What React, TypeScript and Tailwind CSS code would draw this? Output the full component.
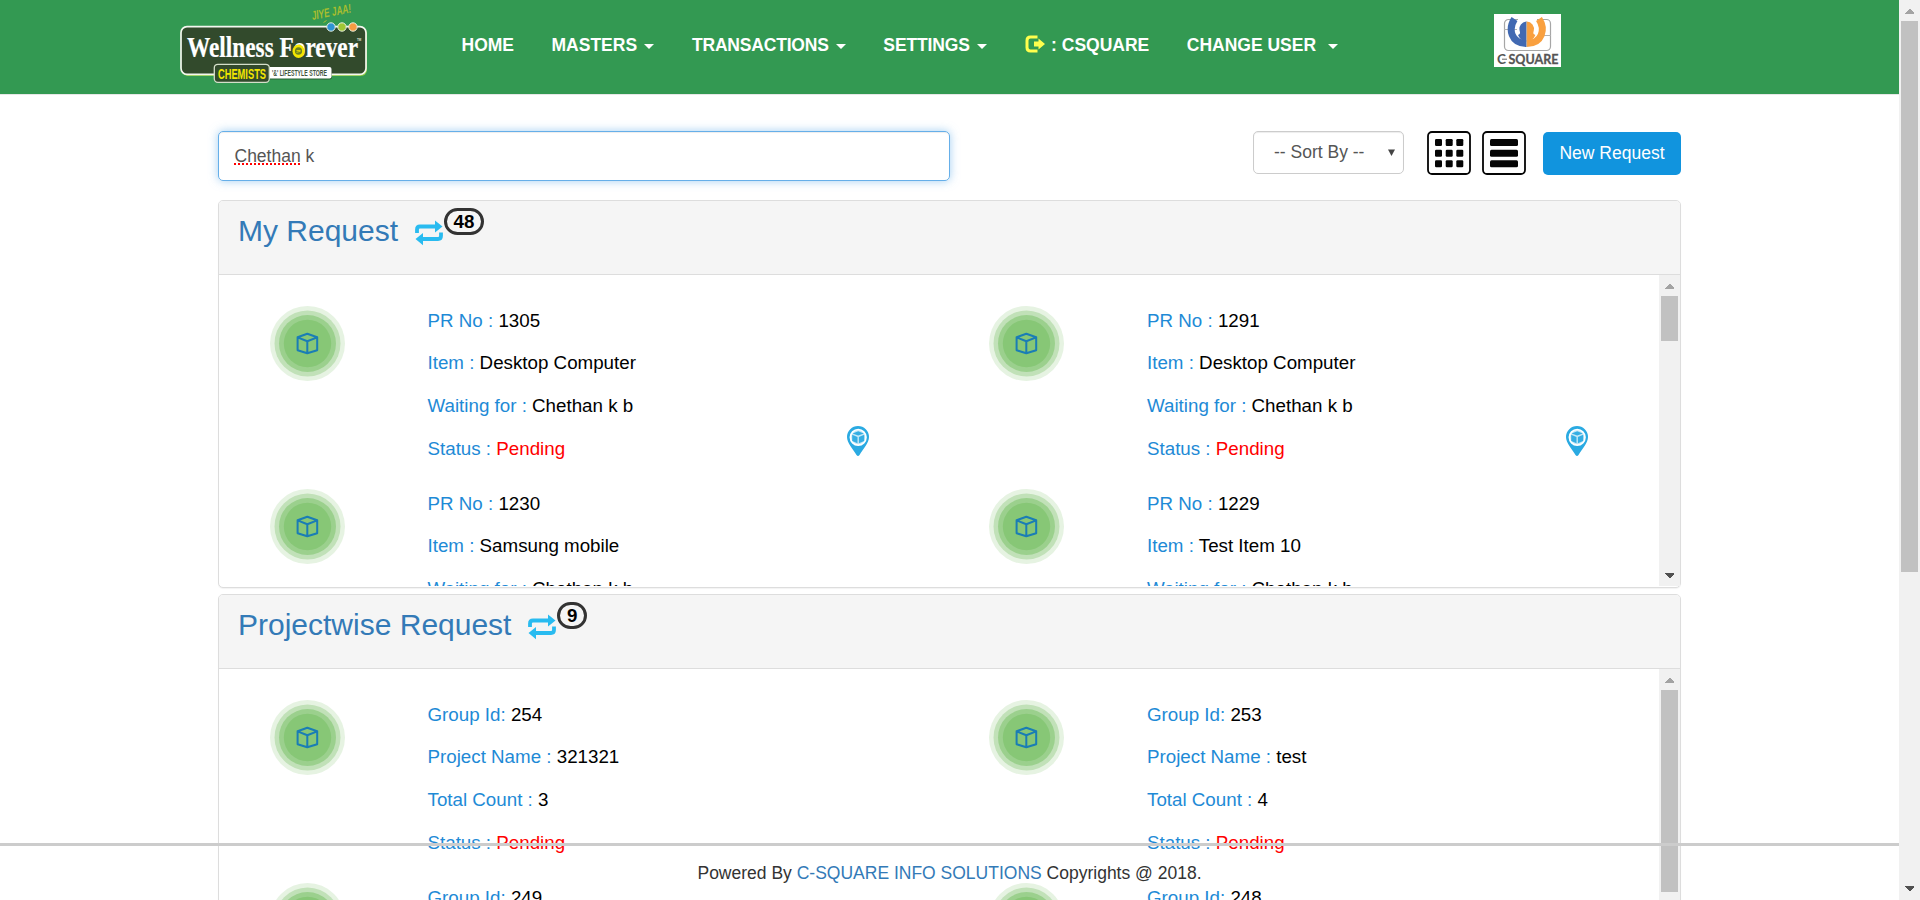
import React from "react";

type Field = { label: string; value: string; alert?: boolean };
type Entry = { id: string; fields: Field[]; pin?: boolean };

const request = (no: string, item: string): Entry => ({
  id: no,
  pin: true,
  fields: [
    { label: "PR No :", value: no },
    { label: "Item :", value: item },
    { label: "Waiting for :", value: "Chethan k b" },
    { label: "Status :", value: "Pending", alert: true },
  ],
});

const group = (id: string, name: string, count: string): Entry => ({
  id,
  fields: [
    { label: "Group Id:", value: id },
    { label: "Project Name :", value: name },
    { label: "Total Count :", value: count },
    { label: "Status :", value: "Pending", alert: true },
  ],
});

const requests = [
  request("1305", "Desktop Computer"),
  request("1291", "Desktop Computer"),
  request("1230", "Samsung mobile"),
  request("1229", "Test Item 10"),
];

const groups = [
  group("254", "321321", "3"),
  group("253", "test", "4"),
  group("249", "test", "1"),
  group("248", "test", "1"),
];

function Caret() {
  return (
    <svg className="ml-[2.5px] mt-[2px] h-[5px] w-[10px]" viewBox="0 0 10 5">
      <path d="M0 0h10L5 5z" fill="#fff" />
    </svg>
  );
}

function WellnessLogo() {
  return (
    <svg className="h-[94px] w-[200px]" viewBox="0 0 200 94">
      <text x="0" y="0" transform="translate(132.500 20) rotate(-11)" fontFamily="Liberation Sans Narrow, Liberation Sans, sans-serif" fontStyle="italic" fontSize="12.5" textLength="40" lengthAdjust="spacingAndGlyphs" fill="#a9bd2f">JIYE JAA!</text>
      <path d="M143.500 22.500l3-2" stroke="#a9bd2f" strokeWidth="1" />
      <rect x="2" y="28" width="185" height="48" rx="6" fill="#8ccb3f" />
      <rect x="1" y="26.7" width="185" height="47.6" rx="6" fill="#324a2c" stroke="#f4f7ef" strokeWidth="1.7" />
      <circle cx="151" cy="27" r="4.200" fill="#2e94d4" stroke="#e8efe0" strokeWidth="1" />
      <circle cx="162" cy="27" r="4.200" fill="#9fc735" stroke="#e8efe0" strokeWidth="1" />
      <circle cx="173" cy="27" r="4.200" fill="#f79c42" stroke="#e8efe0" strokeWidth="1" />
      <text x="7" y="57" fontFamily="Liberation Serif, serif" fontSize="28.500" textLength="171" lengthAdjust="spacingAndGlyphs" fill="#fff" stroke="#fff" strokeWidth="0.2">Wellness Forever</text>
      <ellipse cx="118.5" cy="51.3" rx="6" ry="6.7" fill="#f3e600" />
      <ellipse cx="118.5" cy="51" rx="3.6" ry="3.8" fill="#6f8420" />
      <path d="M116.5 50.5h4M116.5 52.3l4-1" stroke="#f3e600" strokeWidth="0.8" />
      <text x="177" y="41" fontFamily="Liberation Sans, sans-serif" fontSize="3" fill="#dfe6da">TM</text>
      <rect x="88" y="67" width="64" height="12.5" rx="2.5" fill="#263c22" opacity=".6" />
      <rect x="88" y="67" width="63.5" height="11.5" rx="2" fill="#fff" />
      <rect x="34.3" y="64.3" width="55" height="18" rx="3.5" fill="#324a2c" stroke="#d5dfca" strokeWidth="1.3" />
      <text x="38" y="78.8" fontFamily="Liberation Sans Narrow, Liberation Sans, sans-serif" fontWeight="bold" fontSize="15.3" textLength="48" lengthAdjust="spacingAndGlyphs" fill="#f3e600">CHEMISTS</text>
      <text x="92" y="76.4" fontFamily="Liberation Sans Narrow, Liberation Sans, sans-serif" fontWeight="bold" fontSize="8.4" textLength="55" lengthAdjust="spacingAndGlyphs" fill="#44543f">'&amp;' LIFESTYLE STORE</text>
    </svg>
  );
}

function CSquareLogo() {
  return (
    <svg className="h-[53px] w-[67px] bg-white" viewBox="0 0 67 53">
      <rect x="10.5" y="5.5" width="46" height="31" rx="4" fill="none" stroke="#a6a6a6" strokeWidth="1.2" />
      <path d="M10 15.5h13M44 21.5h13" stroke="#b2b2b2" strokeWidth="1" />
      <path d="M24 1h19v6H24z" fill="#fff" />
      <path d="M20.5 5C14 15 17 29.500 32.700 29.500" fill="none" stroke="#4169b2" strokeWidth="7" />
      <path d="M45 5c6.500 10 3.500 24.500-12.300 24.500" fill="none" stroke="#f9a03f" strokeWidth="7" />
      <path d="M32.700 7.500a7.500 7.500 0 0 0-7 9.500c.5 2 .8 3-1.700 4 1.500 4 5 6 8.700 7z" fill="#4169b2" />
      <path d="M32.700 7.500a7.500 7.500 0 0 1 7 9.500c-.5 2-.8 3 1.700 4-1.500 4-5 6-8.700 7z" fill="#f9a03f" />
      <path d="M32.700 7.500V33" stroke="#cdbfa8" strokeWidth="0.600" />
      <text x="3" y="50" fontFamily="Lato, sans-serif" fontWeight="bold" fontSize="14" textLength="9" lengthAdjust="spacingAndGlyphs" fill="#555">C</text>
      <path d="M8 45.200h5" stroke="#555" strokeWidth="0.900" />
      <text x="14.500" y="50" fontFamily="Lato, sans-serif" fontWeight="bold" fontSize="14" textLength="50" lengthAdjust="spacingAndGlyphs" fill="#555" stroke="#555" strokeWidth="0.300">SQUARE</text>
    </svg>
  );
}

function LogOutIcon() {
  return (
    <svg className="mr-[6.500px] -mt-[3px] h-[18px] w-[20px]" viewBox="0 0 20 18">
      <path d="M12.500 2H5.500Q2 2 2 5.500v7Q2 16 5.500 16h7" fill="none" stroke="#ffff4d" strokeWidth="3" />
      <path d="M9 6.500h4.500V3.500L20 9l-6.500 5.500v-3H9z" fill="#ffff4d" />
    </svg>
  );
}

function RepeatIcon() {
  return (
    <svg className="mt-[19px] h-[26px] w-[28px]" viewBox="0 0 28 26">
      <path d="M2 13V9.500Q2 6.500 5 6.500h16M26 12.500V16q0 3-3 3H7" fill="none" stroke="#29bbf0" strokeWidth="3.800" />
      <path d="M20 .5L27.500 6.500 20 12.500zM8 13L.5 19 8 25.200z" fill="#29bbf0" />
    </svg>
  );
}

function CubeBadge() {
  return (
    <svg className="mt-[6.500px] h-[75px] w-[75px]" viewBox="0 0 75 75">
      <circle cx="37.500" cy="37.500" r="37.500" fill="#e6f3e2" />
      <circle cx="37.500" cy="37.500" r="33" fill="#c1e1b8" />
      <circle cx="37.500" cy="37.500" r="28.500" fill="#9bd08d" />
      <circle cx="37.500" cy="37.500" r="23.700" fill="#87c776" />
      <path d="M37.300 27.800L47.200 31.200V44.200L37.300 47.300 27.600 44.200V31.200zM27.600 31.400l9.700 3.900 9.900-3.900M37.300 35.300V47" fill="none" stroke="#1a7db5" strokeWidth="2" strokeLinejoin="round" />
    </svg>
  );
}

function PinIcon() {
  return (
    <svg className="mt-[127px] h-[30px] w-[22px]" viewBox="0 0 22 30">
      <path d="M11 0a11 11 0 0 1 11 11c0 6-6 12-9.500 18q-1.500 2-3 0C6 23 0 17 0 11A11 11 0 0 1 11 0z" fill="#2aaae2" />
      <circle cx="11.200" cy="11.300" r="7.800" fill="#c4e8f7" stroke="#fff" strokeWidth="1.700" />
      <path d="M11.200 5.300l5.600 2.100-5.600 2.200-5.600-2.200zM5.200 8.800l5.300 2.200v6.200l-5.300-2.200zM17.200 8.800l-5.300 2.200v6.200l5.300-2.200z" fill="#35aee3" />
    </svg>
  );
}

function Arrow({ down }: { down?: boolean }) {
  return (
    <svg className="h-[5px] w-[9px]" viewBox="0 0 9 5" shapeRendering="crispEdges">
      {down ? <path d="M0 0h9v1L5 5H4L0 1z" fill="#505050" /> : <path d="M0 5h9V4L5 0H4L0 4z" fill="#a3a3a3" />}
    </svg>
  );
}

function ScrollTrack({ thumb, end }: { thumb: string; end: string }) {
  return (
    <div className={`flex h-full w-[21px] shrink-0 flex-col items-center bg-[#f1f1f1] pt-[9px] ${end}`}>
      <Arrow />
      <div className={`mt-[7px] w-[17px] shrink-0 bg-[#c1c1c1] ${thumb}`} />
      <div className="mt-auto">
        <Arrow down />
      </div>
    </div>
  );
}

function Card({ entry }: { entry: Entry }) {
  return (
    <article className="flex h-[183px] items-start pl-[50.500px]">
      <CubeBadge />
      <div className="ml-[83px] mt-[0.700px] w-[419px] text-[18.75px] leading-[42.67px] text-black">
        {entry.fields.map((f) => (
          <p key={f.label} className="whitespace-nowrap">
            <span className="text-[#1e8ad6]">{f.label}</span>{" "}
            <span className={f.alert ? "text-[#ff0000]" : ""}>{f.value}</span>
          </p>
        ))}
      </div>
      {entry.pin && <PinIcon />}
    </article>
  );
}

function Panel({ title, count, entries, thumb }: { title: string; count: string; entries: Entry[]; thumb: string }) {
  return (
    <section className="h-[388px] shrink-0 rounded-[5px] border border-[#ddd] bg-white shadow-[0_1px_1px_rgba(0,0,0,0.05)]">
      <header className="flex h-[74px] items-start rounded-t-[4px] border-b border-[#ddd] bg-[#f5f5f5] pl-[19px]">
        <h3 className="mr-[16.500px] mt-[12px] text-[30px] leading-[36px] text-[#337ab7]">{title}</h3>
        <RepeatIcon />
        <span className="ml-[1.500px] mt-[7px] flex h-[27px] items-center rounded-full border-[3px] border-[#333] px-[6.500px] text-[18.75px] font-bold leading-[21px] text-black">
          {count}
        </span>
      </header>
      <div className="flex h-[311px] overflow-hidden">
        <div className="grid flex-1 grid-cols-[719.500px_719.500px] content-start overflow-hidden pt-[24px]">
          {entries.map((e) => (
            <Card key={e.id} entry={e} />
          ))}
        </div>
        <ScrollTrack thumb={thumb} end="pb-[8px]" />
      </div>
    </section>
  );
}

const menu = "flex h-[24px] items-center whitespace-pre";

export default function App() {
  return (
    <div className="relative flex h-[900px] w-[1920px] overflow-hidden bg-white font-['Liberation_Sans',Arial,sans-serif] text-[17.5px] text-[#333]">
      <div className="flex w-[1899px] flex-col">
        <nav className="flex h-[95px] shrink-0 items-start border-b border-[#e7e7e7] bg-[#339952] pl-[180px] font-bold text-white">
          <WellnessLogo />
          <div className="ml-[81.500px] mt-[33px] flex w-[1032.500px] gap-[37.5px]">
            <a className={menu}>HOME</a>
            <a className={menu}>MASTERS <Caret /></a>
            <a className={menu}><span className="tracking-[-0.190px]">TRANSACTIONS </span><Caret /></a>
            <a className={menu}><span className="tracking-[-0.130px]">SETTINGS </span><Caret /></a>
            <a className={menu}><LogOutIcon />: CSQUARE</a>
            <a className={menu}>{"CHANGE USER  "}<Caret /></a>
          </div>
          <div className="mt-[14px]">
            <CSquareLogo />
          </div>
        </nav>
        <main className="flex flex-col pl-[218px] pr-[218px] pt-[36px]">
          <div className="flex h-[69px] items-start">
            <div className="flex h-[50px] w-[732px] items-center rounded-[5px] border border-[#66afe9] pl-[15.500px] text-[#555] shadow-[inset_0_1px_1px_rgba(0,0,0,0.075),0_0_10px_rgba(102,175,233,0.6)]">
              <span>
                <span className="underline decoration-[#f00] decoration-dotted decoration-[2px] underline-offset-[2px] [text-decoration-skip-ink:none]">Chethan</span> k
              </span>
            </div>
            <div className="ml-[303px] flex h-[43px] w-[151px] items-center rounded-[5px] border border-[#ccc] pb-px pl-[20px] text-[#555] shadow-[inset_0_1px_1px_rgba(0,0,0,0.075)]">
              <span className="whitespace-nowrap">-- Sort By --</span>
              <svg className="ml-auto mr-[8.500px] h-[7px] w-[7px]" viewBox="0 0 8 8">
                <path d="M0 .5h8L4 8z" fill="#444" />
              </svg>
            </div>
            <svg className="ml-[23px] h-[44px] w-[44px]" viewBox="0 0 44 44">
              <rect x="1" y="1" width="42" height="42" rx="4" fill="#fff" stroke="#050505" strokeWidth="1.800" />
              {[8, 18.700, 29.300].map((y) =>
                [8, 18.700, 29.300].map((x) => <rect key={`${x}-${y}`} x={x} y={y} width="7" height="7" rx="1.200" fill="#050505" />),
              )}
            </svg>
            <svg className="ml-[11px] h-[44px] w-[44px]" viewBox="0 0 44 44">
              <rect x="1" y="1" width="42" height="42" rx="4" fill="#fff" stroke="#050505" strokeWidth="1.800" />
              {[8, 18.700, 29.300].map((y) => (
                <rect key={y} x="8" y={y} width="28" height="7" rx="1.500" fill="#050505" />
              ))}
            </svg>
            <button className="ml-[17px] mt-px flex h-[43px] w-[138px] items-center justify-center whitespace-nowrap rounded-[5px] bg-[#1194de] pb-px text-white">
              New Request
            </button>
          </div>
          <div className="flex flex-col gap-[6px]">
            <Panel title="My Request" count="48" entries={requests} thumb="h-[45px]" />
            <Panel title="Projectwise Request" count="9" entries={groups} thumb="h-[202px]" />
          </div>
        </main>
      </div>
      <ScrollTrack thumb="h-[551px]" end="pb-[9px]" />
      <footer className="absolute bottom-0 left-0 h-[57px] w-[1899px] border-t-[3px] border-[#ccc] pt-[15px] text-center leading-[25px]">
        Powered By <a className="text-[#337ab7]">C-SQUARE INFO SOLUTIONS</a> Copyrights @ 2018.
      </footer>
    </div>
  );
}
